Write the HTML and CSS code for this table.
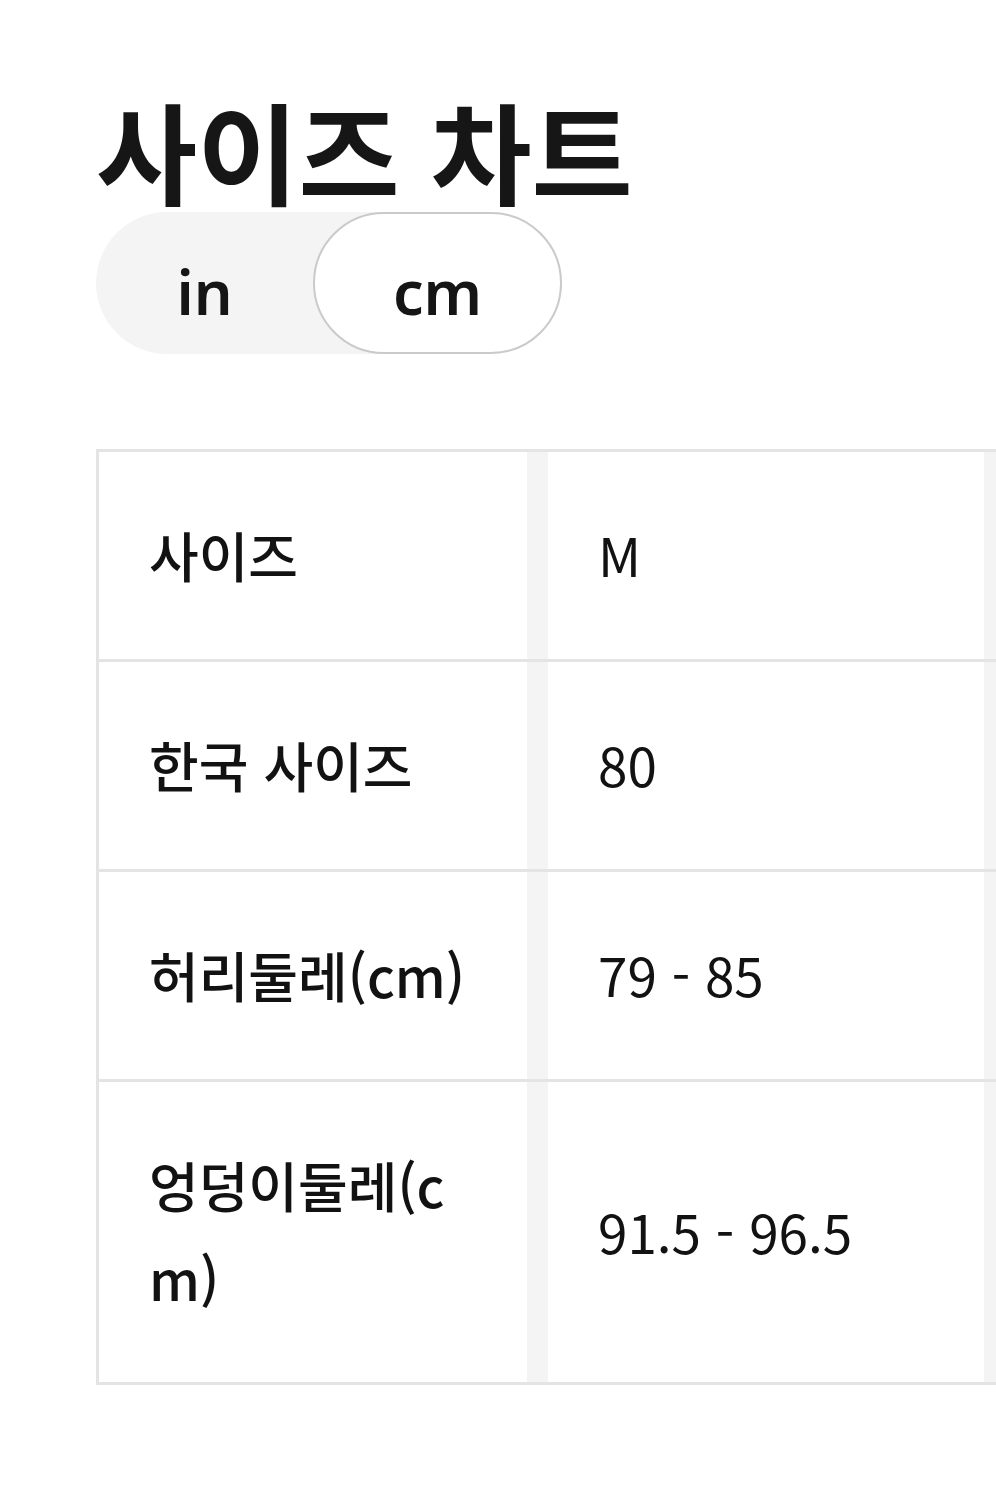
FILE: index.html
```html
<!DOCTYPE html>
<html lang="ko">
<head>
<meta charset="utf-8">
<title>사이즈 차트</title>
<link rel="stylesheet" href="styles.css">
</head>
<body>
<main class="page">
  <h1 class="title">사이즈 차트</h1>
  <div class="unit-toggle" role="group">
    <button class="unit-btn" type="button">in</button>
    <button class="unit-btn is-active" type="button">cm</button>
  </div>
  <div class="table-wrap">
    <table class="size-table">
      <tbody>
        <tr>
          <th class="label">사이즈</th>
          <td class="val">M</td>
          <td class="val"></td>
        </tr>
        <tr>
          <th class="label">한국 사이즈</th>
          <td class="val">80</td>
          <td class="val"></td>
        </tr>
        <tr>
          <th class="label">허리둘레(cm)</th>
          <td class="val">79 - 85</td>
          <td class="val"></td>
        </tr>
        <tr>
          <th class="label">엉덩이둘레(cm)</th>
          <td class="val">91.5 - 96.5</td>
          <td class="val"></td>
        </tr>
      </tbody>
    </table>
  </div>
</main>
</body>
</html>
```
FILE: styles.css
```css
html, body {
  margin: 0;
  padding: 0;
  background: #ffffff;
}
body {
  width: 996px;
  overflow: hidden;
  font-family: "Noto Sans CJK KR", "Noto Sans", sans-serif;
  color: #151515;
}
.page {
  padding: 86px 0 0 96px;
}
.title {
  margin: 0;
  font-size: 110px;
  line-height: 126px;
  font-weight: 600;
  color: #161616;
  letter-spacing: 0;
}
.unit-toggle {
  display: inline-flex;
  background: #f4f4f4;
  border-radius: 72px;
  height: 142px;
}
.unit-btn {
  font-family: "Noto Sans", "Noto Sans CJK KR", sans-serif;
  font-size: 61px;
  font-weight: 600;
  color: #151515;
  background: transparent;
  border: 2px solid transparent;
  border-radius: 72px;
  height: 142px;
  padding: 17px 0 0 0;
  margin: 0;
  cursor: pointer;
}
.unit-btn:first-child {
  width: 217px;
}
.unit-btn.is-active {
  width: 249px;
  background: #ffffff;
  border-color: #cacaca;
}
.table-wrap {
  margin-top: 95px;
  overflow: hidden;
}
.size-table {
  border-collapse: separate;
  border-spacing: 0;
  border-top: 3px solid #e4e4e4;
  border-left: 3px solid #e4e4e4;
  table-layout: fixed;
  width: 1345px;
}
.size-table th,
.size-table td {
  font-size: 54px;
  line-height: 93px;
  font-weight: 500;
  text-align: left;
  vertical-align: middle;
  padding: 56px 50px 58px;
  border-bottom: 3px solid #e4e4e4;
  word-break: break-all;
  color: #121212;
}
.size-table .label {
  width: 328px;
}
.size-table .val {
  width: 336px;
  padding-left: 71px;
  font-size: 53px;
  font-weight: 400;
  box-shadow: inset 21px 0 0 #f4f4f4;
}
```
